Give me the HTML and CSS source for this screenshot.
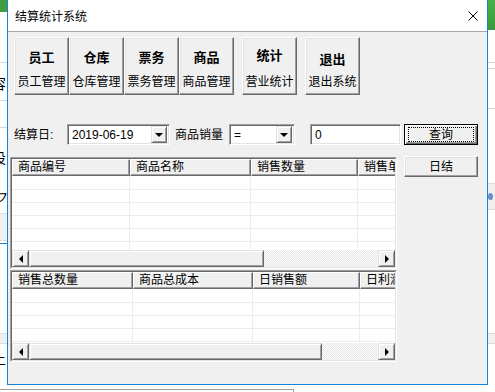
FILE: index.html
```html
<!DOCTYPE html>
<html lang="zh-CN">
<head>
    <meta charset="UTF-8">
    <title>结算统计系统</title>
    <link rel="stylesheet" href="styles.css">
</head>
<body>
    <!-- Ventana de fondo (otra aplicación) -->
    <div class="under under-left">
        <div class="u-green"></div>
        <div class="u-line" style="top:62px"></div>
        <div class="u-line" style="top:100px"></div>
        <div class="u-line" style="top:127px"></div>
        <span class="u-char" style="top:75px">容</span>
        <span class="u-char" style="top:149px">设</span>
        <span class="u-char italic" style="top:189px">ワ</span>
        <div class="u-band" style="top:213px;height:28px"></div>
        <div class="u-blue" style="top:243px"></div>
        <div class="u-band" style="top:333px;height:11px"></div>
        <span class="u-char" style="top:350px">土</span>
    </div>
    <div class="under under-right">
        <div class="u-green tall"></div>
        <div class="u-line" style="top:62px"></div>
        <div class="u-line" style="top:68px"></div>
        <div class="u-line" style="top:108px"></div>
        <div class="u-band" style="top:183px;height:27px"><i class="u-dot"></i></div>
        <div class="u-band" style="top:333px;height:11px"></div>
    </div>
    <div class="under-bottom"></div>

    <div class="window">
        <div class="titlebar">
            <span class="title">结算统计系统</span>
            <svg class="close" width="10" height="10" viewBox="0 0 10 10">
                <path d="M0.5 0.5 L9.5 9.5 M9.5 0.5 L0.5 9.5" stroke="#000" stroke-width="1" fill="none"/>
            </svg>
        </div>

        <div class="client">
            <!-- Barra de herramientas -->
            <div class="toolbar">
                <button class="tool"><b>员工</b><span>员工管理</span></button>
                <button class="tool"><b>仓库</b><span>仓库管理</span></button>
                <button class="tool"><b>票务</b><span>票务管理</span></button>
                <button class="tool"><b>商品</b><span>商品管理</span></button>
                <button class="tool sep up"><b>统计</b><span>营业统计</span></button>
                <button class="tool sep down"><b>退出</b><span>退出系统</span></button>
            </div>

            <!-- Filtros -->
            <div class="query-row">
                <label class="lbl-date">结算日:</label>
                <div class="combo combo-date"><span>2019-06-19</span><i class="drop"></i></div>
                <label class="lbl-qty">商品销量</label>
                <div class="combo combo-op"><span>=</span><i class="drop"></i></div>
                <div class="textbox">0</div>
                <button class="btn default"><span class="focus">查询</span></button>
            </div>

            <div class="main-row">
                <div class="grids">
                    <div class="grid grid-top">
                        <div class="grid-box">
                            <div class="grid-head">
                                <div class="th" style="width:118px">商品编号</div>
                                <div class="th" style="width:121px">商品名称</div>
                                <div class="th" style="width:107px">销售数量</div>
                                <div class="th" style="width:100px">销售单价</div>
                            </div>
                            <div class="grid-body">
                                <div class="tr"><i style="width:118px"></i><i style="width:121px"></i><i style="width:107px"></i><i style="width:100px"></i></div>
                                <div class="tr"><i style="width:118px"></i><i style="width:121px"></i><i style="width:107px"></i><i style="width:100px"></i></div>
                                <div class="tr"><i style="width:118px"></i><i style="width:121px"></i><i style="width:107px"></i><i style="width:100px"></i></div>
                                <div class="tr"><i style="width:118px"></i><i style="width:121px"></i><i style="width:107px"></i><i style="width:100px"></i></div>
                                <div class="tr"><i style="width:118px"></i><i style="width:121px"></i><i style="width:107px"></i><i style="width:100px"></i></div>
                                <div class="tr"><i style="width:118px"></i><i style="width:121px"></i><i style="width:107px"></i><i style="width:100px"></i></div>
                            </div>
                            <div class="hscroll">
                                <div class="sb-btn left"></div>
                                <div class="sb-thumb" style="width:235px"></div>
                                <div class="sb-track"></div>
                                <div class="sb-btn right"></div>
                            </div>
                        </div>
                    </div>

                    <div class="grid grid-bottom">
                        <div class="grid-box">
                            <div class="grid-head">
                                <div class="th" style="width:121px">销售总数量</div>
                                <div class="th" style="width:120px">商品总成本</div>
                                <div class="th" style="width:107px">日销售额</div>
                                <div class="th" style="width:100px">日利润</div>
                            </div>
                            <div class="grid-body">
                                <div class="tr"><i style="width:121px"></i><i style="width:120px"></i><i style="width:107px"></i><i style="width:100px"></i></div>
                                <div class="tr"><i style="width:121px"></i><i style="width:120px"></i><i style="width:107px"></i><i style="width:100px"></i></div>
                                <div class="tr"><i style="width:121px"></i><i style="width:120px"></i><i style="width:107px"></i><i style="width:100px"></i></div>
                                <div class="tr"><i style="width:121px"></i><i style="width:120px"></i><i style="width:107px"></i><i style="width:100px"></i></div>
                            </div>
                            <div class="hscroll">
                                <div class="sb-btn left"></div>
                                <div class="sb-thumb" style="width:293px"></div>
                                <div class="sb-track"></div>
                                <div class="sb-btn right"></div>
                            </div>
                        </div>
                    </div>
                </div>

                <button class="btn btn-day">日结</button>
            </div>
        </div>
    </div>
</body>
</html>
```

FILE: styles.css
```css
:root {
    --face: #f0f0f0;
    --light: #e3e3e3;
    --shadow: #a0a0a0;
    --dark: #696969;
    --blue: #1883d7;
}

* {
    box-sizing: border-box;
}

body {
    margin: 0;
    width: 495px;
    height: 392px;
    overflow: hidden;
    position: relative;
    background: #fff;
    color: #000;
    font-family: "Liberation Sans", "Noto Sans CJK SC", sans-serif;
    font-size: 12px;
}

/* ---- aplicación de fondo ---- */
.under {
    position: absolute;
    top: 0;
    width: 7px;
    height: 392px;
    overflow: hidden;
}

.under-left { left: 0; }
.under-right { left: 488px; }

.u-green {
    position: absolute;
    left: 0;
    top: 0;
    width: 100%;
    height: 12px;
    background: #3c9e3c;
}

.u-green.tall {
    height: 30px;
    background: linear-gradient(#4cb04c, #3a9a3a);
}

.u-line {
    position: absolute;
    left: 0;
    width: 100%;
    height: 1px;
    background: #d5d5d5;
}

.u-band {
    position: absolute;
    left: 0;
    width: 100%;
    background: #f0f0f0;
    border-top: 1px solid #dcdcdc;
    border-bottom: 1px solid #dcdcdc;
}

.u-blue {
    position: absolute;
    left: 0;
    width: 100%;
    height: 1px;
    background: var(--blue);
}

.u-char {
    position: absolute;
    left: -8px;
    font-size: 14px;
    line-height: 16px;
    font-family: "Noto Sans CJK SC", sans-serif;
}

.u-char.italic {
    font-style: italic;
}

.u-dot {
    position: absolute;
    left: 0;
    top: 9px;
    width: 5px;
    height: 7px;
    border-radius: 50%;
    background: #6a8fc8;
}

.under-bottom {
    position: absolute;
    left: 0;
    top: 389px;
    width: 294px;
    height: 10px;
    border-top: 1px solid var(--shadow);
    border-right: 1px solid var(--shadow);
}

/* ---- ventana ---- */
.window {
    position: absolute;
    left: 7px;
    top: -1px;
    width: 481px;
    height: 386px;
    border: 1px solid var(--blue);
    background: var(--face);
    display: flex;
    flex-direction: column;
}

.titlebar {
    height: 32px;
    flex: none;
    background: #fff;
    border-bottom: 1px solid #a8a8a8;
    display: flex;
    align-items: center;
    padding-left: 7px;
}

.title {
    font-family: "Noto Sans CJK SC", sans-serif;
    font-size: 12px;
    line-height: 16px;
}

.close {
    margin-left: auto;
    margin-right: 9px;
}

.client {
    flex: 1;
    padding-top: 5px;
}

/* ---- botones de la barra ---- */
.toolbar {
    display: flex;
    margin-left: 6px;
    height: 58px;
}

.tool {
    width: 55px;
    height: 58px;
    padding: 12px 0 0;
    background: var(--face);
    border: 1px solid;
    border-color: #fff var(--dark) var(--dark) #fff;
    box-shadow: inset -1px -1px var(--shadow), inset 1px 1px var(--light);
    display: flex;
    flex-direction: column;
    align-items: center;
    font: inherit;
    color: #000;
}

.tool b {
    display: block;
    height: 16px;
    font-size: 13px;
    line-height: 16px;
    font-weight: bold;
}

.tool span {
    display: block;
    margin-top: 9px;
    line-height: 14px;
    white-space: nowrap;
}

.tool.sep {
    margin-left: 8px;
}

.tool.up b { margin-top: -2px; margin-bottom: 2px; }
.tool.down b { margin-top: 2px; margin-bottom: -2px; }

/* ---- fila de filtros ---- */
.query-row {
    display: flex;
    align-items: center;
    margin-top: 29px;
    height: 21px;
}

.query-row label {
    line-height: 14px;
    white-space: nowrap;
}

.lbl-date {
    margin-left: 6px;
    width: 53px;
}

.lbl-qty {
    margin-left: 5px;
    width: 54px;
}

.combo,
.textbox {
    height: 21px;
    background: #fff;
    border: 1px solid;
    border-color: var(--shadow) #fff #fff var(--shadow);
    box-shadow: inset 1px 1px var(--dark), inset -1px -1px var(--light);
    display: flex;
    align-items: center;
    padding: 0 2px 0 4px;
    line-height: 14px;
}

.combo-date { width: 103px; }
.combo-op { width: 66px; }

.textbox {
    margin-left: 15px;
    width: 91px;
    padding-left: 4px;
}

.drop {
    margin-left: auto;
    width: 16px;
    height: 17px;
    background: var(--face);
    border: 1px solid;
    border-color: var(--light) var(--dark) var(--dark) var(--light);
    box-shadow: inset 1px 1px #fff, inset -1px -1px var(--shadow);
    display: flex;
    align-items: center;
    justify-content: center;
}

.drop::after {
    content: "";
    border-left: 4px solid transparent;
    border-right: 4px solid transparent;
    border-top: 4px solid #000;
    margin-top: 1px;
}

.btn {
    width: 74px;
    height: 21px;
    padding: 0;
    background: var(--face);
    border: 1px solid;
    border-color: #fff var(--dark) var(--dark) #fff;
    box-shadow: inset -1px -1px var(--shadow), inset 1px 1px var(--light);
    font: inherit;
    color: #000;
    line-height: 14px;
}

.btn.default {
    margin-left: 3px;
    padding: 2px 3px;
    border: 1px solid #000;
    box-shadow: inset 1px 1px #fff, inset -1px -1px var(--dark), inset -2px -2px var(--shadow);
}

.focus {
    display: flex;
    align-items: center;
    justify-content: center;
    height: 100%;
    border: 1px dotted #000;
}

/* ---- rejillas ---- */
.main-row {
    display: flex;
    align-items: flex-start;
    margin-top: 12px;
}

.grids {
    margin-left: 2px;
    width: 387px;
}

.btn-day {
    margin-left: 7px;
    margin-top: -1px;
}

.grid {
    border: 1px solid;
    border-color: var(--shadow) #fff #fff var(--shadow);
    background: #fff;
}

.grid-top { height: 112px; }
.grid-bottom { height: 92px; margin-top: 1px; }

.grid-box {
    height: 100%;
    border: 1px solid;
    border-color: var(--dark) var(--light) var(--light) var(--dark);
    display: flex;
    flex-direction: column;
    overflow: hidden;
}

.grid-head {
    display: flex;
    flex: none;
    height: 17px;
    background: var(--face);
}

.th {
    flex: none;
    height: 17px;
    padding-left: 5px;
    border: 1px solid;
    border-color: #fff var(--dark) var(--dark) #fff;
    box-shadow: inset -1px -1px var(--shadow);
    line-height: 14px;
    white-space: nowrap;
    overflow: hidden;
}

.grid-body {
    flex: 1;
    overflow: hidden;
    padding-top: 1px;
}

.tr {
    display: flex;
    height: 13px;
}

.tr i {
    flex: none;
    height: 13px;
    border-right: 1px solid #ececec;
    border-bottom: 1px solid #ececec;
}

/* ---- barra de desplazamiento ---- */
.hscroll {
    display: flex;
    flex: none;
    height: 17px;
}

.sb-btn,
.sb-thumb {
    flex: none;
    height: 17px;
    background: var(--face);
    border: 1px solid;
    border-color: var(--light) var(--dark) var(--dark) var(--light);
    box-shadow: inset 1px 1px #fff, inset -1px -1px var(--shadow);
}

.sb-btn {
    width: 17px;
    display: flex;
    align-items: center;
    justify-content: center;
}

.sb-btn.left::after {
    content: "";
    border-top: 4px solid transparent;
    border-bottom: 4px solid transparent;
    border-right: 4px solid #000;
}

.sb-btn.right::after {
    content: "";
    border-top: 4px solid transparent;
    border-bottom: 4px solid transparent;
    border-left: 4px solid #000;
}

.sb-track {
    flex: 1;
    background: repeating-conic-gradient(#e4e4e4 0 25%, #fff 0 50%) 0 0 / 2px 2px;
}
```
